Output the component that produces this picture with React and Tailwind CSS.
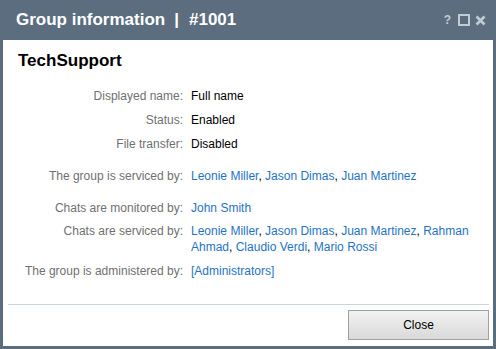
import React from 'react';

const rows = [
  { label: 'Displayed name:', value: 'Full name' },
  { label: 'Status:', value: 'Enabled' },
  { label: 'File transfer:', value: 'Disabled', gap: 'mb-4' },
  { label: 'The group is serviced by:', links: ['Leonie Miller', 'Jason Dimas', 'Juan Martinez'], gap: 'mb-4' },
  { label: 'Chats are monitored by:', links: ['John Smith'], gap: 'mb-[7px]' },
  { label: 'Chats are serviced by:', links: ['Leonie Miller', 'Jason Dimas', 'Juan Martinez', 'Rahman Ahmad', 'Claudio Verdi', 'Mario Rossi'] },
  { label: 'The group is administered by:', links: ['[Administrators]'] },
];

function LinkName({ name }) {
  const words = name.split(' ');
  return words.map((w, i) => (
    <React.Fragment key={i}>
      <a className="text-[#1e73c6] cursor-pointer">{w}</a>
      {i < words.length - 1 && ' '}
    </React.Fragment>
  ));
}

function Row({ row }) {
  return (
    <div className={`grid grid-cols-[180px_280px] gap-x-2 leading-4 ${row.gap || 'mb-2'}`}>
      <div className="text-right text-[#707070]">{row.label}</div>
      <div className="text-black">
        {row.value}
        {row.links &&
          row.links.map((name, i) => (
            <React.Fragment key={name}>
              <LinkName name={name} />
              {i < row.links.length - 1 && <span>, </span>}
            </React.Fragment>
          ))}
      </div>
    </div>
  );
}

export default function App() {
  return (
    <div className="w-[496px] h-[349px] bg-[#5b6d7f] flex flex-col px-[3px] pb-[3px] font-['Liberation_Sans',Arial,sans-serif] text-[12px]">
      {/* Title bar */}
      <div className="h-[40px] flex items-center justify-between pl-[13px] pr-[7px] shrink-0">
        <h1 className="text-white font-bold text-[17px] flex items-center">
          <span>Group information</span>
          <span className="ml-[9px] mr-[10px]">|</span>
          <span>#1001</span>
        </h1>
        <div className="flex items-center gap-[5px] text-[#c3cbd3]">
          <span className="text-[12px] font-bold leading-none mr-[2px]">?</span>
          <svg width="12" height="12" viewBox="0 0 12 12">
            <rect x="1" y="1" width="10" height="10" fill="none" stroke="currentColor" strokeWidth="2" />
          </svg>
          <svg width="11" height="11" viewBox="0 0 11 11">
            <path d="M1.5 1.5 L9.5 9.5 M9.5 1.5 L1.5 9.5" stroke="currentColor" strokeWidth="2.6" />
          </svg>
        </div>
      </div>

      {/* Body */}
      <div className="flex-1 bg-white flex flex-col">
        <h2 className="pl-[15px] pt-[11px] text-[17px] leading-5 font-bold text-black">TechSupport</h2>
        <div className="mt-[17px]">
          {rows.map((row) => (
            <Row key={row.label} row={row} />
          ))}
        </div>
        <div className="flex-1" />
        <div className="ml-[5px] mr-[4px] h-px bg-[#c9d5df]" />
        <div className="flex justify-end pr-[4px] pt-[5px] pb-[6px]">
          <button className="w-[141px] h-[30px] border border-[#a0a0a0] bg-gradient-to-b from-[#f2f2f2] to-[#d9d9d9] text-black text-[12px]">
            Close
          </button>
        </div>
      </div>
    </div>
  );
}
